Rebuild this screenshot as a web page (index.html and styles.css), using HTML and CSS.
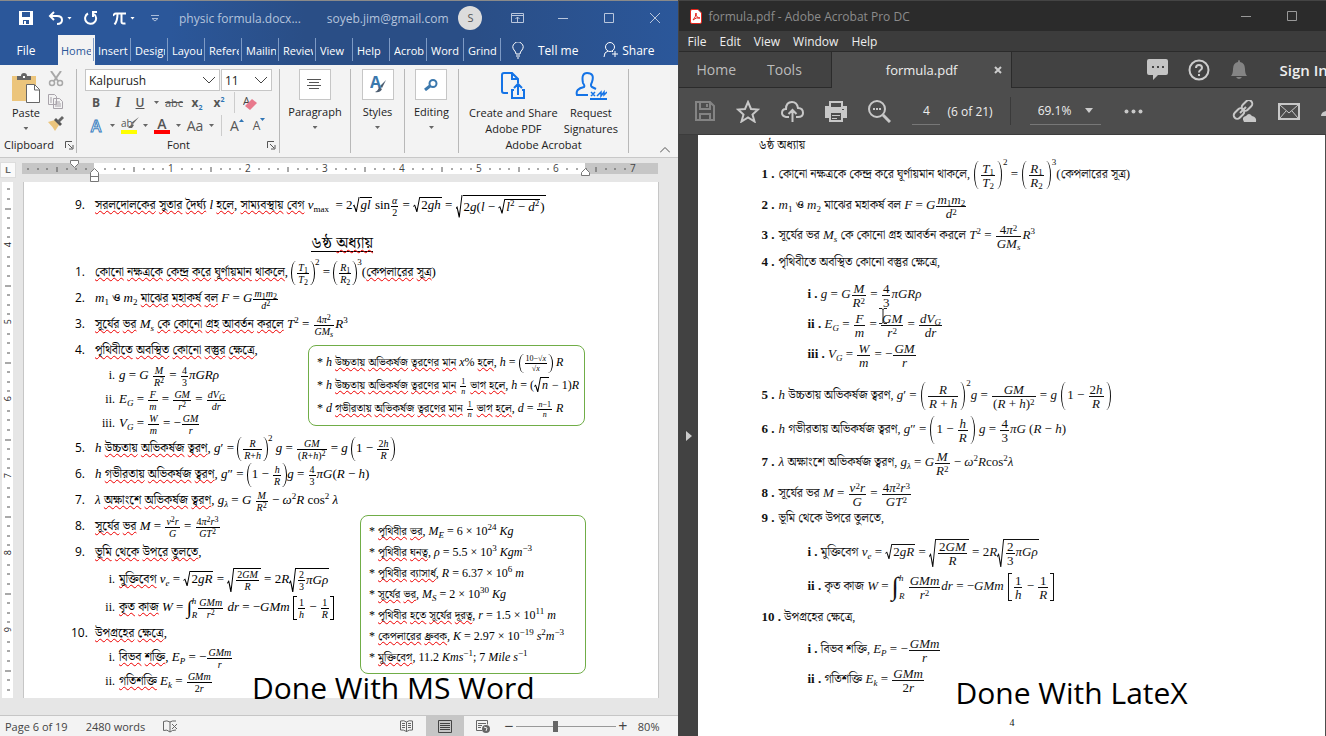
FILE: index.html
```
<!DOCTYPE html>
<html lang="bn">
  <head>
    <meta charset="utf-8">
    <title>Word and LaTeX</title>
    <link rel="stylesheet" href="styles.css">
  </head>
  <body>
    <svg class="defs">
      <symbol id="ticks" viewBox="0 0 67 12">
        <path d="M4 6h2M14 6h2M23 6h2M43 6h2M52 6h2M62 6h2" stroke="#555" stroke-width="1" fill="none" />
        <path d="M34 4v5" stroke="#555" fill="none" />
      </symbol>
      <symbol id="vticks" viewBox="0 0 12 67">
        <path d="M5 5h3M5 14h3M5 24h3M5 43h3M5 53h3M5 62h3M3 34h6" stroke="#555" fill="none" />
      </symbol>
      <symbol id="launch" viewBox="0 0 9 9">
        <path d="M.5 7V.5H7M3 3l4 4M8 4v4H4" stroke="#555" fill="none" />
      </symbol>
    </svg>

    <div class="screen">
      <section class="word">
        <header class="word-top">
          <div class="word-title">
            <button class="qa" aria-label="Save"><svg width="14" height="14" viewBox="0 0 14 14"><path d="M0 0h14v14H0z" fill="#fff" /><path d="M3 1h8v5H3zM4 9h6v4H4z" fill="#2b579a" /><path d="M5 10h2v3H5z" fill="#fff" /></svg></button>
            <button class="qa undo" aria-label="Undo"><svg width="15" height="14" viewBox="0 0 15 14"><path d="M6 1L2 5l4 4M2 5h7q5 0 5 4t-5 4" stroke="#fff" stroke-width="2" fill="none" /></svg></button>
            <span class="caret light"></span>
            <button class="qa redo" aria-label="Redo"><svg width="14" height="14" viewBox="0 0 14 14"><path d="M4 2.500A5.500 5.500 0 1 0 10 3M9 6V1M8 1h5" stroke="#fff" stroke-width="2" fill="none" /></svg></button>
            <button class="qa pi" aria-label="Equation"><svg width="13" height="13" viewBox="0 0 13 13"><path d="M0 4q1-2.500 3-2.500h10M4.500 2q0 7-3 10.500M8.500 2v8q0 2 4 1.500" stroke="#fff" stroke-width="2" fill="none" /></svg></button>
            <span class="caret light"></span>
            <svg class="more" width="8" height="7" viewBox="0 0 8 7"><path d="M0 .5h8M1 3.500h6L4 6z" stroke="#a9bcd9" fill="none" /></svg>
            <span class="doc-name">physic formula.docx...</span>
            <span class="account">soyeb.jim@gmail.com</span>
            <span class="avatar">S</span>
            <button class="win" aria-label="Ribbon options"><svg width="13" height="10" viewBox="0 0 13 10"><path d="M.5.5h12v9H.5zM0 2.500h13M6.500 9V4M4.500 6l2-2 2 2" /></svg></button>
            <button class="win" aria-label="Minimize"><svg width="10" height="10" viewBox="0 0 10 10"><path d="M0 5.500h10" /></svg></button>
            <button class="win" aria-label="Maximize"><svg width="10" height="10" viewBox="0 0 10 10"><path d="M.5.500h9v9h-9z" /></svg></button>
            <button class="win" aria-label="Close"><svg width="10" height="10" viewBox="0 0 10 10"><path d="M0 0l10 10M10 0L0 10" /></svg></button>
          </div>
          <nav class="tabs">
            <button class="file">File</button>
            <button class="tab active"><span>Home</span></button>
            <button class="tab"><span>Insert</span></button>
            <button class="tab"><span>Design</span></button>
            <button class="tab"><span>Layout</span></button>
            <button class="tab"><span>References</span></button>
            <button class="tab"><span>Mailings</span></button>
            <button class="tab"><span>Review</span></button>
            <button class="tab"><span>View</span></button>
            <button class="tab"><span>Help</span></button>
            <button class="tab"><span>Acrobat</span></button>
            <button class="tab"><span>Word</span></button>
            <button class="tab"><span>Grind</span></button>
            <button class="tell"><svg width="12" height="17" viewBox="0 0 12 17"><path d="M4 12q0-2-2-4a5 5 0 1 1 8 0q-2 2-2 4zM4 14h4M5 16h2" stroke="#fff" fill="none" /></svg>Tell me</button>
            <button class="share"><svg width="16" height="16" viewBox="0 0 16 16"><circle cx="7" cy="5" r="4.500" stroke="#fff" fill="none" /><path d="M1 15q0-5 4-6M9 9l1 1M12 9v6M9 12h6" stroke="#fff" fill="none" /></svg>Share</button>
          </nav>
        </header>

        <div class="ribbon">
          <div class="group clipboard">
            <div class="group-body">
              <button class="paste">
                <svg width="28" height="30" viewBox="0 0 28 30"><path d="M0 3h24v25H0z" fill="#ecc57c" /><path d="M5 3h4q0-3 3-3t3 3h4v4H5z" fill="#666" /><path d="M11 3h2v2h-2z" fill="#fff" /><path d="M14.500 11.500h8l5 5v13h-13z" fill="#fff" stroke="#666" /><path d="M22.500 12v5h5" fill="none" stroke="#666" /></svg>
                Paste
                <span class="caret"></span>
              </button>
              <div class="clip-icons">
                <button aria-label="Cut"><svg width="16" height="16" viewBox="0 0 16 16" fill="none" stroke="#a8a8a8" stroke-width="2"><path d="M3 0l7 10M13 0L6 10" /><circle cx="4" cy="12" r="2.500" stroke-width="1.500" /><circle cx="12" cy="12" r="2.500" stroke-width="1.500" /></svg></button>
                <button aria-label="Copy"><svg width="16" height="15" viewBox="0 0 16 15" fill="#f3f3f3" stroke="#a9a4ab"><path d="M.5.5h6l2 2v8h-8zM5.500 4.500h6l3 3v7h-9zM2 4h2M2 6h2M2 8h2M7 8h5M7 10h6M7 12h6" /></svg></button>
                <button aria-label="Format painter"><svg width="16" height="15" viewBox="0 0 16 15"><path d="M0 6l7-2 4 5-4 6q-2-4-7-9z" fill="#ecc57c" /><path d="M6 4l2-2 6 6-2 2z" fill="#555" /><path d="M9 5l5-5 2 2-5 5z" fill="#666" /></svg></button>
              </div>
            </div>
            <div class="group-name">Clipboard<svg class="launch"><use href="#launch" /></svg></div>
          </div>

          <div class="group font">
            <div class="combos">
              <select class="combo face" aria-label="Font"><option>Kalpurush</option></select>
              <select class="combo size" aria-label="Font size"><option>11</option></select>
            </div>
            <div class="tools">
              <button class="bold">B</button>
              <button class="italic">I</button>
              <button class="under">U</button>
              <span class="caret"></span>
              <button class="strike">abc</button>
              <button class="bold">x<sub>2</sub></button>
              <button class="bold">x<sup>2</sup></button>
              <span class="split"></span>
              <button class="clear" aria-label="Clear formatting"><svg width="15" height="15" viewBox="0 0 15 15"><text x="0" y="9" font-size="11" fill="#444">A</text><path d="M9 3l5 4-7 7-5-4z" fill="#e8798c" /></svg></button>
            </div>
            <div class="tools">
              <button class="effect">A</button>
              <span class="caret"></span>
              <button class="mark">ab<svg width="12" height="12" viewBox="0 0 12 12"><path d="M12 0L6 7 4 6zM5 7L1 11h4l2-3z" fill="#666" /></svg></button>
              <span class="caret"></span>
              <button class="color">A</button>
              <span class="caret"></span>
              <button class="case">Aa</button>
              <span class="caret"></span>
              <span class="split"></span>
              <button class="grow">A<svg width="5" height="3" viewBox="0 0 5 3"><path d="M0 3h5L2.500 0z" fill="#2f75b5" /></svg></button>
              <button class="grow small">A<svg width="5" height="3" viewBox="0 0 5 3"><path d="M0 0h5L2.500 3z" fill="#2f75b5" /></svg></button>
            </div>
            <div class="group-name">Font<svg class="launch"><use href="#launch" /></svg></div>
          </div>

          <div class="group wide">
            <button class="big">
              <span class="tile"><svg width="16" height="12" viewBox="0 0 16 12"><path d="M0 .5h14M2 3.500h10M0 6.500h14M2 9.500h10" stroke="#555" /></svg></span>
              Paragraph
              <span class="caret"></span>
            </button>
          </div>
          <div class="group">
            <button class="big">
              <span class="tile"><svg width="16" height="17" viewBox="0 0 16 17"><text class="glyph" x="0" y="12">A</text><path d="M16 4l-4 8-2-2zM9 11l3 2q-2 4-7 3 3-1 4-5z" fill="#4b5c70" /></svg></span>
              Styles
              <span class="caret"></span>
            </button>
          </div>
          <div class="group">
            <button class="big">
              <span class="tile"><svg width="14" height="12" viewBox="0 0 14 12"><circle cx="9" cy="4.500" r="3.500" fill="none" stroke="#3b78ad" stroke-width="2" /><path d="M6 7l-5 4" stroke="#3b78ad" stroke-width="3" /></svg></span>
              Editing
              <span class="caret"></span>
            </button>
          </div>
          <div class="group acrobat">
            <div class="group-body">
              <button class="adobe">
                <svg width="24" height="28" viewBox="0 0 24 28" fill="none" stroke="#1473e6" stroke-width="2"><path d="M7 21H3q-2 0-2-2V3q0-2 2-2h8l6 6v4M11 1v6h6M13 18h-2v8h12v-8h-2M17 23V13M13 16l4-4 4 4" /></svg>
                Create and Share<br>Adobe PDF
              </button>
              <button class="adobe">
                <svg width="32" height="28" viewBox="0 0 32 28" fill="none" stroke="#1473e6" stroke-width="2"><path d="M13 23H2q-2-6 7-8 1-1-1-4-2-10 4-10 8 0 5 9-2 4 0 5l4 2M15 27h17" /><path d="M16 20l4 4M20 20l-4 4M22 24l4-4v4l3-4v3l3-3" stroke-width="1.500" /></svg>
                Request<br>Signatures
              </button>
            </div>
            <div class="group-name">Adobe Acrobat</div>
          </div>
          <button class="collapse" aria-label="Collapse ribbon"><svg width="10" height="6" viewBox="0 0 10 6"><path d="M0 5.500l5-5 5 5" stroke="#555" fill="none" /></svg></button>
        </div>

        <div class="ruler">
          <span class="tab-kind">L</span>
          <div class="scale">
            <span class="inch"><svg><use href="#ticks" /></svg></span>
            <span class="inch"><svg><use href="#ticks" /></svg>1</span>
            <span class="inch"><svg><use href="#ticks" /></svg>2</span>
            <span class="inch"><svg><use href="#ticks" /></svg>3</span>
            <span class="inch"><svg><use href="#ticks" /></svg>4</span>
            <span class="inch"><svg><use href="#ticks" /></svg>5</span>
            <span class="inch"><svg><use href="#ticks" /></svg>6</span>
            <span class="inch"><svg><use href="#ticks" /></svg>7</span>
            <svg class="marker first" width="9" height="8" viewBox="0 0 9 8"><path d="M.5.5h8v3l-4 4-4-4z" fill="#fff" stroke="#777" /></svg>
            <svg class="marker hang" width="9" height="14" viewBox="0 0 9 14"><path d="M4.500.5l4 4v9h-8v-9zM.5 8.500h8" fill="#fff" stroke="#777" /></svg>
            <svg class="marker right" width="9" height="8" viewBox="0 0 9 8"><path d="M4.500.5l4 4v3h-8v-3z" fill="#fff" stroke="#777" /></svg>
          </div>
        </div>

        <div class="canvas">
          <div class="vruler">
            <span class="vinch"><svg><use href="#vticks" /></svg><b>4</b></span>
            <span class="vinch"><svg><use href="#vticks" /></svg><b>5</b></span>
            <span class="vinch"><svg><use href="#vticks" /></svg><b>6</b></span>
            <span class="vinch"><svg><use href="#vticks" /></svg><b>7</b></span>
            <span class="vinch"><svg><use href="#vticks" /></svg><b>8</b></span>
            <span class="vinch"><svg><use href="#vticks" /></svg><b>9</b></span>
            <span class="vinch"><svg><use href="#vticks" /></svg></span>
          </div>

          <article class="page">
            <p class="line top"><span class="num">9.</span><u>সরলদোলকের</u> <u>সুতার</u> <u>দৈর্ঘ্য</u> <i>l</i> <u>হলে</u>, <u>সাম্যবস্থায়</u> <u>বেগ</u> <i>v</i><sub>max</sub>&nbsp; = 2<span class="sqrt"><span><i>gl</i></span></span> sin<span class="frac"><span><i>α</i></span><span>2</span></span> = <span class="sqrt"><span>2<i>gh</i></span></span> = <span class="sqrt tall"><span>2<i>g</i>(<i>l</i> − <span class="sqrt"><span><i>l</i><sup>2</sup> − <i>d</i><sup>2</sup></span></span>)</span></span></p>
            <h2 class="chapter"><span>৬ষ্ঠ <u>অধ্যায়</u></span></h2>
            <p class="line"><span class="num">1.</span><u>কোনো</u> <u>নক্ষত্রকে</u> <u>কেন্দ্র</u> <u>করে</u> <u>ঘূর্ণায়মান</u> <u>থাকলে</u>, <span class="lp"></span><span class="frac"><span><i>T</i><sub>1</sub></span><span><i>T</i><sub>2</sub></span></span><span class="rp"></span><sup class="hi">2</sup> = <span class="lp"></span><span class="frac"><span><i>R</i><sub>1</sub></span><span><i>R</i><sub>2</sub></span></span><span class="rp"></span><sup class="hi">3</sup>(<u>কেপলারের</u> <u>সূত্র</u>)</p>
            <p class="line"><span class="num">2.</span><i>m</i><sub>1</sub> <span class="bn">ও</span> <i>m</i><sub>2</sub> <u>মাঝের</u> <u>মহাকর্ষ</u> <u>বল</u> <i>F</i> = <i>G</i><span class="frac"><span><i>m</i><sub>1</sub><i>m</i><sub>2</sub></span><span><i>d</i><sup>2</sup></span></span></p>
            <p class="line"><span class="num">3.</span><u>সূর্যের</u> <u>ভর</u> <i>M<sub>s</sub></i> <u>কে</u> <u>কোনো</u> <u>গ্রহ</u> <u>আবর্তন</u> <u>করলে</u> <i>T</i><sup>2</sup> = <span class="frac"><span>4<i>π</i><sup>2</sup></span><span><i>GM<sub>s</sub></i></span></span><i>R</i><sup>3</sup></p>
            <p class="line"><span class="num">4.</span><u>পৃথিবীতে</u> <u>অবস্থিত</u> <u>কোনো</u> <u>বস্তুর</u> <u>ক্ষেত্রে</u>,</p>
            <p class="line sub"><span class="num">i.</span><i>g</i> = <i>G</i> <span class="frac"><span><i>M</i></span><span><i>R</i><sup>2</sup></span></span> = <span class="frac"><span>4</span><span>3</span></span><i>πGRρ</i></p>
            <p class="line sub"><span class="num">ii.</span><i>E<sub>G</sub></i> = <span class="frac"><span><i>F</i></span><span><i>m</i></span></span> = <span class="frac"><span><i>GM</i></span><span><i>r</i><sup>2</sup></span></span> = <span class="frac"><span><i>dV<sub>G</sub></i></span><span><i>dr</i></span></span></p>
            <p class="line sub"><span class="num">iii.</span><i>V<sub>G</sub></i> = <span class="frac"><span><i>W</i></span><span><i>m</i></span></span> = −<span class="frac"><span><i>GM</i></span><span><i>r</i></span></span></p>
            <p class="line"><span class="num">5.</span><i>h</i> <u>উচ্চতায়</u> <u>অভিকর্ষজ</u> <u>ত্বরণ</u>, <i>g</i>′ = <span class="lp"></span><span class="frac"><span><i>R</i></span><span><i>R</i>+<i>h</i></span></span><span class="rp"></span><sup class="hi">2</sup> <i>g</i> = <span class="frac"><span><i>GM</i></span><span>(<i>R</i>+<i>h</i>)<sup>2</sup></span></span> = <i>g</i> <span class="lp"></span>1 − <span class="frac"><span>2<i>h</i></span><span><i>R</i></span></span><span class="rp"></span></p>
            <p class="line"><span class="num">6.</span><i>h</i> <u>গভীরতায়</u> <u>অভিকর্ষজ</u> <u>ত্বরণ</u>, <i>g</i>″ = <span class="lp"></span>1 − <span class="frac"><span><i>h</i></span><span><i>R</i></span></span><span class="rp"></span><i>g</i> = <span class="frac"><span>4</span><span>3</span></span><i>πG</i>(<i>R</i> − <i>h</i>)</p>
            <p class="line"><span class="num">7.</span><i>λ</i> <u>অক্ষাংশে</u> <u>অভিকর্ষজ</u> <u>ত্বরণ</u>, <i>g<sub>λ</sub></i> = <i>G</i> <span class="frac"><span><i>M</i></span><span><i>R</i><sup>2</sup></span></span> − <i>ω</i><sup>2</sup><i>R</i> cos<sup>2</sup> <i>λ</i></p>
            <p class="line"><span class="num">8.</span><u>সূর্যের</u> <u>ভর</u> <i>M</i> = <span class="frac"><span><i>v</i><sup>2</sup><i>r</i></span><span><i>G</i></span></span> = <span class="frac"><span>4<i>π</i><sup>2</sup><i>r</i><sup>3</sup></span><span><i>GT</i><sup>2</sup></span></span></p>
            <p class="line"><span class="num">9.</span><u>ভূমি</u> <u>থেকে</u> <u>উপরে</u> <u>তুলতে</u>,</p>
            <p class="line sub deep"><span class="num">i.</span><u>মুক্তিবেগ</u> <i>v<sub>e</sub></i> = <span class="sqrt"><span>2<i>gR</i></span></span> = <span class="sqrt tall"><span><span class="frac"><span>2<i>GM</i></span><span><i>R</i></span></span></span></span> = 2<i>R</i><span class="sqrt tall"><span><span class="frac"><span>2</span><span>3</span></span><i>πGρ</i></span></span></p>
            <p class="line sub deep"><span class="num">ii.</span><u>কৃত</u> <u>কাজ</u> <i>W</i> = <span class="int">∫</span><span class="lim"><i>h</i><i>R</i></span><span class="frac"><span><i>GMm</i></span><span><i>r</i><sup>2</sup></span></span> <i>dr</i> = −<i>GMm</i> <span class="lb"></span><span class="frac"><span>1</span><span><i>h</i></span></span> − <span class="frac"><span>1</span><span><i>R</i></span></span><span class="rb"></span></p>
            <p class="line ten"><span class="num">10.</span><u>উপগ্রহের</u> <u>ক্ষেত্রে</u>,</p>
            <p class="line sub"><span class="num">i.</span><u>বিভব</u> <u>শক্তি</u>, <i>E<sub>P</sub></i> = −<span class="frac"><span><i>GMm</i></span><span><i>r</i></span></span></p>
            <p class="line sub"><span class="num">ii.</span><u>গতিশক্তি</u> <i>E<sub>k</sub></i> = <span class="frac"><span><i>GMm</i></span><span>2<i>r</i></span></span></p>

            <aside class="note heights">
              <p>* <i>h</i> <u>উচ্চতায়</u> <u>অভিকর্ষজ</u> <u>ত্বরণের</u> <u>মান</u> <i>x</i>% <u>হলে</u>, <i>h</i> = <span class="lp"></span><span class="frac"><span>10−√<i>x</i></span><span>√<i>x</i></span></span><span class="rp"></span> <i>R</i></p>
              <p>* <i>h</i> <u>উচ্চতায়</u> <u>অভিকর্ষজ</u> <u>ত্বরণের</u> <u>মান</u> <span class="frac"><span>1</span><span><i>n</i></span></span> <u>ভাগ</u> <u>হলে</u>, <i>h</i> = (<span class="sqrt"><span><i>n</i></span></span> − 1)<i>R</i></p>
              <p>* <i>d</i> <u>গভীরতায়</u> <u>অভিকর্ষজ</u> <u>ত্বরণের</u> <u>মান</u> <span class="frac"><span>1</span><span><i>n</i></span></span> <u>ভাগ</u> <u>হলে</u>, <i>d</i> = <span class="frac"><span><i>n</i>−1</span><span><i>n</i></span></span> <i>R</i></p>
            </aside>
            <aside class="note values">
              <p>* <u>পৃথিবীর</u> <u>ভর</u>, <i>M<sub>E</sub></i> = 6 × 10<sup>24</sup> <i>Kg</i></p>
              <p>* <u>পৃথিবীর</u> <u>ঘনত্ব</u>, <i>ρ</i> = 5.5 × 10<sup>3</sup> <i>Kgm</i><sup>−3</sup></p>
              <p>* <u>পৃথিবীর</u> <u>ব্যাসার্ধ</u>, <i>R</i> = 6.37 × 10<sup>6</sup> <i>m</i></p>
              <p>* <u>সূর্যের</u> <u>ভর</u>, <i>M<sub>S</sub></i> = 2 × 10<sup>30</sup> <i>Kg</i></p>
              <p>* <u>পৃথিবীর</u> <u>হতে</u> <u>সূর্যের</u> <u>দূরত্ব</u>, <i>r</i> = 1.5 × 10<sup>11</sup> <i>m</i></p>
              <p>* <u>কেপলারের</u> <u>ধ্রুবক</u>, <i>K</i> = 2.97 × 10<sup>−19</sup> <i>s</i><sup>2</sup><i>m</i><sup>−3</sup></p>
              <p>* <u>মুক্তিবেগ</u>, 11.2 <i>Kms</i><sup>−1</sup>; 7 <i>Mile s</i><sup>−1</sup></p>
            </aside>
            <div class="caption">Done With MS Word</div>
          </article>
        </div>

        <footer class="status">
          <span>Page 6 of 19</span>
          <span class="words">2480 words</span>
          <svg width="15" height="13" viewBox="0 0 15 13" fill="none" stroke="#666"><path d="M7 12V2Q4 0 .5 1.500v9Q4 9 7 12zM7 2q2-1.500 6-1M7 12q2-2 6-2M9 4l5 5M14 4L9 9" /></svg>
          <span class="spacer"></span>
          <button class="view" aria-label="Read mode"><svg width="13" height="12" viewBox="0 0 13 12" fill="none" stroke="#666"><path d="M6.500 12V2Q4 0 .5 1v9q3-.5 6 1.500 3-2 6-1.500V1q-3.500-1-6 1M2 3.500h3M2 5.500h3M2 7.500h3M8 3.500h3M8 5.500h3M8 7.500h3" /></svg></button>
          <button class="view on" aria-label="Print layout"><svg width="14" height="13" viewBox="0 0 14 13" fill="none" stroke="#444"><path d="M.5.5h13v12H.5zM2 3.500h10M2 5.500h10M2 7.500h10M2 9.500h10" /></svg></button>
          <button class="view" aria-label="Web layout"><svg width="14" height="13" viewBox="0 0 14 13" fill="none" stroke="#666"><path d="M6 10.500H.5V.5h11v4M2 3.500h8M2 5.500h4M2 7.500h3" /><circle cx="10" cy="9" r="4" fill="#666" stroke="none" /><path d="M8 7l3 1-1 3" stroke="#eee" /></svg></button>
          <span class="zoom-sign">−</span>
          <input class="zoom" type="range" min="10" max="190" value="80" aria-label="Zoom">
          <span class="zoom-sign">+</span>
          <span class="percent">80%</span>
        </footer>
      </section>

      <section class="acro">
        <header class="acro-title">
          <svg width="12" height="15" viewBox="0 0 12 15"><path d="M2 .5h6l3.500 3.500v9q0 1.500-1.500 1.500H2Q.5 14.500.5 13V2Q.5.5 2 .5z" fill="#fff" stroke="#e2231a" /><path d="M3 11q3-3 3-7 0 5 4 5-4-1-7 2" fill="none" stroke="#e2231a" /></svg>
          <span>formula.pdf - Adobe Acrobat Pro DC</span>
          <span class="spacer"></span>
          <button class="win" aria-label="Minimize"><svg width="10" height="10" viewBox="0 0 10 10"><path d="M0 5.500h10" /></svg></button>
          <button class="win" aria-label="Maximize"><svg width="10" height="10" viewBox="0 0 10 10"><path d="M.5.5h9v9h-9z" /></svg></button>
        </header>
        <nav class="menu">
          <button>File</button><button>Edit</button><button>View</button><button>Window</button><button>Help</button>
        </nav>
        <div class="acro-tabs">
          <div class="home-tabs"><button>Home</button><button>Tools</button></div>
          <div class="file-tab"><span>formula.pdf</span><button aria-label="Close tab"><svg width="8" height="8" viewBox="0 0 8 8"><path d="M1 1l6 6M7 1L1 7" stroke="#ccc" stroke-width="2" /></svg></button></div>
          <div class="user-tabs">
            <svg width="21" height="21" viewBox="0 0 21 21"><path d="M2 0h17q2 0 2 2v12q0 2-2 2h-8l-5 5v-5H2q-2 0-2-2V2q0-2 2-2z" fill="#c4c4c4" /><path d="M5 7h2v2H5zM10 7h2v2h-2zM15 7h2v2h-2z" fill="#444" /></svg>
            <svg width="22" height="22" viewBox="0 0 22 22"><circle cx="11" cy="11" r="9.500" fill="none" stroke="#ccc" stroke-width="2" /><path d="M8 9q0-3 3-3t3 3q0 1-1.500 2T11 13.500M11 15v2" fill="none" stroke="#ccc" stroke-width="2" /></svg>
            <svg width="18" height="20" viewBox="0 0 18 20"><path d="M9 0q1 0 1 2 5 1 5 7 0 5 2 7H1q2-2 2-7 0-6 5-7 0-2 1-2zM6 17h6q-3 4-6 0z" fill="#848484" /></svg>
            <button class="sign">Sign In</button>
          </div>
        </div>
        <div class="acro-tools">
          <button aria-label="Save"><svg width="20" height="20" viewBox="0 0 20 20" fill="none" stroke="#848484" stroke-width="2"><path d="M1 1h14l4 4v14H1zM5 1v7h10V1M5 19v-6h10v6M12 3v3" /></svg></button>
          <button aria-label="Star"><svg width="24" height="23" viewBox="0 0 24 23"><path d="M12 2l3 7 7 .5-5.500 5 2 7L12 17.500l-6.500 4 2-7L2 9.500 9 9z" fill="none" stroke="#c8c8c8" stroke-width="2" /></svg></button>
          <button aria-label="Upload"><svg width="23" height="21" viewBox="0 0 23 21" fill="none" stroke="#c8c8c8" stroke-width="2"><path d="M8 16H5q-4-1-4-4 0-4 4-4 0-7 6-7 5 0 6 6 5 0 5 5 0 4-5 4h-2M11.500 21V9M7.500 13l4-4 4 4" /></svg></button>
          <button aria-label="Print"><svg width="22" height="21" viewBox="0 0 22 21"><path d="M4 0h14v5h4v12h-4v4H4v-4H0V5h4z" fill="#c8c8c8" /><path d="M6 2h10v4H6zM6 12h10v7H6zM17 8h2v1h-2z" fill="#4d4d4d" /><path d="M7 14.500h8M7 17.500h5" stroke="#c8c8c8" /></svg></button>
          <button aria-label="Search"><svg width="23" height="23" viewBox="0 0 23 23" fill="none" stroke="#c8c8c8" stroke-width="2"><circle cx="9" cy="9" r="8" /><path d="M15 15l7 7" stroke-width="3" /><path d="M5 9h2M8 9h2M11 9h2" /></svg></button>
          <input class="page-no" value="4" aria-label="Page">
          <span class="of">(6 of 21)</span>
          <span class="bar"></span>
          <select class="zoom-pick" aria-label="Zoom level"><option>69.1%</option></select>
          <svg class="dots" width="19" height="5" viewBox="0 0 19 5" fill="#c8c8c8"><circle cx="2.500" cy="2.500" r="2" /><circle cx="9.500" cy="2.500" r="2" /><circle cx="16.500" cy="2.500" r="2" /></svg>
          <span class="spacer"></span>
          <button aria-label="Share link"><svg width="25" height="22" viewBox="0 0 25 22"><g fill="none" stroke="#c8c8c8" stroke-width="2"><rect x="9" y="2" width="12" height="7" rx="3.500" transform="rotate(-45 15 5.500)" /><rect x="1" y="10" width="12" height="7" rx="3.500" transform="rotate(-45 7 13.500)" /><path d="M8 13l6-6" /></g><path d="M12 22q-3-5 2-6 3-4 6 0 5 1 4 6z" fill="#c8c8c8" /></svg></button>
          <button class="mail" aria-label="Mail"><svg width="22" height="17" viewBox="0 0 22 17" fill="none" stroke="#c8c8c8"><path d="M1 1h20v15H1z" stroke-width="2" /><path d="M2 2l9 8 9-8M2 15l6-7M20 15l-6-7" /></svg></button>
          <svg class="cut" width="5" height="10" viewBox="0 0 5 10"><path d="M0 10q0-4 5-5v5z" fill="#c8c8c8" /></svg>
        </div>
        <div class="acro-view">
          <div class="pane"><svg width="6" height="10" viewBox="0 0 6 10"><path d="M0 0l6 5-6 5z" fill="#ccc" /></svg></div>
          <article class="tex">
            <p class="head">৬ষ্ঠ অধ্যায়</p>
            <p class="line"><b class="num">1 .</b><span class="bn">কোনো নক্ষত্রকে কেন্দ্র করে ঘূর্ণায়মান থাকলে,</span> <span class="lp"></span><span class="frac"><span><i>T</i><sub>1</sub></span><span><i>T</i><sub>2</sub></span></span><span class="rp"></span><sup class="hi">2</sup> = <span class="lp"></span><span class="frac"><span><i>R</i><sub>1</sub></span><span><i>R</i><sub>2</sub></span></span><span class="rp"></span><sup class="hi">3</sup>(<span class="bn">কেপলারের সূত্র</span>)</p>
            <p class="line low"><b class="num">2 .</b><i>m</i><sub>1</sub> <span class="bn">ও</span> <i>m</i><sub>2</sub> <span class="bn">মাঝের মহাকর্ষ বল</span> <i>F</i> = <i>G</i><span class="frac"><span><i>m</i><sub>1</sub><i>m</i><sub>2</sub></span><span><i>d</i><sup>2</sup></span></span></p>
            <p class="line"><b class="num">3 .</b><span class="bn">সূর্যের ভর</span> <i>M<sub>s</sub></i> <span class="bn">কে কোনো গ্রহ আবর্তন করলে</span> <i>T</i><sup>2</sup> = <span class="frac"><span>4<i>π</i><sup>2</sup></span><span><i>GM<sub>s</sub></i></span></span><i>R</i><sup>3</sup></p>
            <p class="line plain"><b class="num">4 .</b><span class="bn">পৃথিবীতে অবস্থিত কোনো বস্তুর ক্ষেত্রে,</span></p>
            <div class="sublist">
              <p class="line sub"><b>i .</b> <i>g</i> = <i>G</i><span class="frac"><span><i>M</i></span><span><i>R</i><sup>2</sup></span></span> = <span class="frac"><span>4</span><span>3</span></span><i>πGRρ</i></p>
              <p class="line sub"><b>ii .</b> <i>E<sub>G</sub></i> = <span class="frac"><span><i>F</i></span><span><i>m</i></span></span> = <span class="frac"><span><i>GM</i></span><span><i>r</i><sup>2</sup></span></span> = <span class="frac"><span><i>dV<sub>G</sub></i></span><span><i>dr</i></span></span></p>
              <p class="line sub"><b>iii .</b> <i>V<sub>G</sub></i> = <span class="frac"><span><i>W</i></span><span><i>m</i></span></span> = −<span class="frac"><span><i>GM</i></span><span><i>r</i></span></span></p>
            </div>
            <p class="line high"><b class="num">5 .</b><i>h</i> <span class="bn">উচ্চতায় অভিকর্ষজ ত্বরণ,</span> <i>g</i>′ = <span class="lp"></span><span class="frac"><span><i>R</i></span><span><i>R</i> + <i>h</i></span></span><span class="rp"></span><sup class="hi">2</sup><i>g</i> = <span class="frac"><span><i>GM</i></span><span>(<i>R</i> + <i>h</i>)<sup>2</sup></span></span> = <i>g</i> <span class="lp"></span>1 − <span class="frac"><span>2<i>h</i></span><span><i>R</i></span></span><span class="rp"></span></p>
            <p class="line high"><b class="num">6 .</b><i>h</i> <span class="bn">গভীরতায় অভিকর্ষজ ত্বরণ,</span> <i>g</i>″ = <span class="lp"></span>1 − <span class="frac"><span><i>h</i></span><span><i>R</i></span></span><span class="rp"></span> <i>g</i> = <span class="frac"><span>4</span><span>3</span></span><i>πG</i> (<i>R</i> − <i>h</i>)</p>
            <p class="line"><b class="num">7 .</b><i>λ</i> <span class="bn">অক্ষাংশে অভিকর্ষজ ত্বরণ,</span> <i>g<sub>λ</sub></i> = <i>G</i><span class="frac"><span><i>M</i></span><span><i>R</i><sup>2</sup></span></span> − <i>ω</i><sup>2</sup><i>R</i>cos<sup>2</sup><i>λ</i></p>
            <p class="line low"><b class="num">8 .</b><span class="bn">সূর্যের ভর</span> <i>M</i> = <span class="frac"><span><i>v</i><sup>2</sup><i>r</i></span><span><i>G</i></span></span> = <span class="frac"><span>4<i>π</i><sup>2</sup><i>r</i><sup>3</sup></span><span><i>GT</i><sup>2</sup></span></span></p>
            <p class="line plain"><b class="num">9 .</b><span class="bn">ভূমি থেকে উপরে তুলতে,</span></p>
            <div class="sublist tight">
              <p class="line sub high"><b>i .</b> <span class="bn">মুক্তিবেগ</span> <i>v<sub>e</sub></i> = <span class="sqrt"><span>2<i>gR</i></span></span> = <span class="sqrt tall"><span><span class="frac"><span>2<i>GM</i></span><span><i>R</i></span></span></span></span> = 2<i>R</i><span class="sqrt tall"><span><span class="frac"><span>2</span><span>3</span></span><i>πGρ</i></span></span></p>
              <p class="line sub high"><b>ii .</b> <span class="bn">কৃত কাজ</span> <i>W</i> = <span class="int">∫</span><span class="lim"><i>h</i><i>R</i></span> <span class="frac"><span><i>GMm</i></span><span><i>r</i><sup>2</sup></span></span><i>dr</i> = −<i>GMm</i> <span class="lb"></span><span class="frac"><span>1</span><span><i>h</i></span></span> − <span class="frac"><span>1</span><span><i>R</i></span></span><span class="rb"></span></p>
            </div>
            <p class="line plain"><b class="num">10 .</b><span class="bn">উপগ্রহের ক্ষেত্রে,</span></p>
            <div class="sublist">
              <p class="line sub"><b>i .</b> <span class="bn">বিভব শক্তি,</span> <i>E<sub>P</sub></i> = −<span class="frac"><span><i>GMm</i></span><span><i>r</i></span></span></p>
              <p class="line sub"><b>ii .</b> <span class="bn">গতিশক্তি</span> <i>E<sub>k</sub></i> = <span class="frac"><span><i>GMm</i></span><span>2<i>r</i></span></span></p>
            </div>
            <p class="folio">4</p>
            <div class="caption">Done With LateX</div>
            <svg class="cursor" width="8" height="16" viewBox="0 0 8 16"><path d="M0 .5h3l1 1 1-1h3M4 1v14M0 15.500h3l1-1 1 1h3" stroke="#222" fill="none" /></svg>
          </article>
        </div>
      </section>
    </div>
  </body>
</html>
```

FILE: styles.css
```
* {
  box-sizing: border-box;
}
body {
  margin: 0;
  font-family: "Open Sans", "Noto Sans", sans-serif;
  font-size: 12px;
  color: #222;
}
p,
h2 {
  margin: 0;
}
button,
input,
select {
  font: inherit;
  color: inherit;
  background: none;
  border: none;
  padding: 0;
  margin: 0;
}
svg {
  flex: none;
}
.defs {
  position: absolute;
  width: 0;
  height: 0;
}
.spacer {
  flex: 1;
}
.screen {
  display: flex;
  height: 100vh;
  overflow: hidden;
}

/* ---------- Word ---------- */
.word {
  flex: 679 1 0;
  min-width: 0;
  display: flex;
  flex-direction: column;
  background: #e6e6e6;
  border-right: 1px solid #444;
}
.word-top {
  background: linear-gradient(90deg, #2b579a 25%, #2a4e86 45%, #2a4e86 70%, #2b579a);
  border-top: 1px solid #8a8a8a;
  color: #fff;
}
.word-title {
  display: flex;
  align-items: center;
  height: 34px;
  padding-left: 19px;
  color: #b4c3dc;
}
.qa {
  display: flex;
}
.undo {
  margin-left: 15px;
}
.redo {
  margin-left: 8px;
}
.pi {
  margin-left: 15px;
}
.caret {
  flex: none;
  width: 5px;
  height: 3px;
  margin: 0 4px;
  background: #666;
  clip-path: polygon(0 0, 100% 0, 50% 100%);
}
.light {
  background: #fff;
}
.more {
  margin: 0 20px 0 12px;
}
.account {
  margin-left: auto;
}
.avatar {
  width: 24px;
  height: 24px;
  margin: 0 12px 0 10px;
  border-radius: 50%;
  background: #dcdcdc;
  color: #555;
  font-size: 11px;
  line-height: 24px;
  text-align: center;
}
.win {
  width: 46px;
  display: flex;
  justify-content: center;
}
.win path {
  fill: none;
  stroke: #b9c6dc;
}
.tabs {
  display: flex;
  height: 30px;
}
.file {
  width: 58px;
  padding-right: 6px;
}
.tab {
  width: 37px;
  padding: 0 4px 0 3px;
  position: relative;
  font-size: 11px;
}
.tab span {
  display: block;
  overflow: hidden;
  text-align: left;
}
.tab::after {
  content: "";
  position: absolute;
  right: 1px;
  top: 3px;
  bottom: 4px;
  border-right: 1px solid #7d9ac5;
}
.active {
  background: #f3f3f3;
  color: #2b579a;
}
.tell,
.share {
  display: flex;
  align-items: center;
}
.tell {
  margin-left: 10px;
  gap: 14px;
}
.share {
  margin-left: auto;
  margin-right: 24px;
  gap: 3px;
}

.ribbon {
  display: flex;
  height: 93px;
  padding: 4px 0;
  background: #f3f3f3;
  border-bottom: 1px solid #c8c8c8;
  font-size: 11px;
}
.group {
  flex: none;
  width: 54px;
  display: flex;
  flex-direction: column;
  align-items: center;
  border-right: 1px solid #b8b8b8;
}
.clipboard {
  width: 77px;
}
.font {
  width: 203px;
  padding: 0 7px 0 8px;
}
.wide {
  width: 71px;
}
.acrobat {
  width: 170px;
}
.group-body {
  display: flex;
  justify-content: center;
}
.group-name {
  margin-top: auto;
  line-height: 16px;
  width: 100%;
  text-align: center;
  position: relative;
}
.clipboard .group-name {
  text-align: left;
  padding-left: 4px;
}
.launch {
  position: absolute;
  right: 2px;
  top: 4px;
  width: 9px;
  height: 9px;
}
.font .launch {
  right: -4px;
}
.paste,
.big,
.adobe {
  display: flex;
  flex-direction: column;
  align-items: center;
}
.paste {
  padding-top: 4px;
  line-height: 20px;
}
.paste .caret {
  margin-top: 4px;
}
.clip-icons {
  display: flex;
  flex-direction: column;
  gap: 7px;
  padding: 2px 0 0 8px;
}
.clip-icons button {
  display: flex;
}
.combos {
  display: flex;
  width: 187px;
  gap: 1px;
}
.combo {
  appearance: none;
  height: 22px;
  padding-left: 3px;
  border: 1px solid #c6c6c6;
  font-size: 12px;
  background: #fff url("data:image/svg+xml,%3Csvg xmlns='http://www.w3.org/2000/svg' width='14' height='8'%3E%3Cpath d='M1 1l6 6 6-6' fill='none' stroke='%23444'/%3E%3C/svg%3E") no-repeat right 3px center;
}
.face {
  flex: 1;
}
.size {
  width: 51px;
}
.tools {
  display: flex;
  align-items: center;
  width: 187px;
  height: 24px;
  font-size: 12px;
  color: #555;
}
.tools button {
  width: 22px;
  height: 20px;
  line-height: 20px;
  text-align: center;
  white-space: nowrap;
}
.tools .caret {
  margin: 0 3px;
}
.tools sup,
.tools sub {
  font-size: 7px;
  color: #2f75b5;
}
.bold {
  font-weight: bold;
}
.italic {
  font: italic bold 14px "Liberation Serif", serif;
}
.under {
  text-decoration: underline;
  font-weight: 600;
}
.tools .strike {
  width: 24px;
  font-size: 11px;
  text-decoration: line-through;
}
.split {
  height: 21px;
  margin: 0 4px;
  border-left: 1px solid #ccc;
}
.clear svg {
  vertical-align: middle;
}
.effect {
  font-size: 16px;
  font-weight: 600;
  color: #fff;
  -webkit-text-stroke: 1px #3a7fc0;
}
.tools .mark,
.tools .color {
  width: 16px;
  height: 17px;
  margin: 0 3px;
  line-height: 13px;
}
.mark {
  display: flex;
  font-size: 10px;
  border-bottom: 4px solid #ff0;
}
.mark svg {
  margin-left: -6px;
}
.color {
  font-size: 14px;
  font-weight: 600;
  border-bottom: 4px solid #f00;
}
.case,
.grow {
  font-size: 14px;
}
.grow svg {
  vertical-align: 9px;
}
.small {
  font-size: 12px;
}
.big {
  line-height: 20px;
}
.tile {
  display: flex;
  align-items: center;
  justify-content: center;
  width: 32px;
  height: 31px;
  margin-bottom: 2px;
  background: #fff;
  border: 1px solid #c6c6c6;
}
.glyph {
  font-size: 16px;
  font-weight: bold;
  fill: #3b78ad;
}
.big .caret {
  margin-top: 4px;
}
.adobe {
  display: block;
  flex: none;
  line-height: 16px;
  padding: 3px 3px 0;
  white-space: nowrap;
}
.adobe svg {
  display: block;
  margin: 0 auto 5px;
}
.collapse {
  margin: auto 8px 0 auto;
  display: flex;
}

.ruler {
  display: flex;
  height: 24px;
  align-items: flex-start;
}
.tab-kind {
  width: 16px;
  height: 16px;
  margin: 4px 6px 0 0;
  background: #fafafa;
  border: 1px solid #ddd;
  font: bold 9px/14px "Liberation Sans", sans-serif;
  color: #666;
  text-align: center;
}
.scale {
  display: flex;
  position: relative;
  width: 636px;
  height: 11px;
  margin-top: 5px;
  background: linear-gradient(90deg, #c6c6c6 72px, #fff 72px 563px, #c6c6c6 563px);
}
.inch {
  display: flex;
  flex: none;
  width: 77px;
  font-size: 10px;
  line-height: 11px;
  color: #444;
}
.inch svg {
  width: 69px;
  height: 12px;
}
.marker {
  position: absolute;
}
.first {
  left: 48px;
  top: -3px;
}
.hang {
  left: 68px;
  top: 5px;
}
.right {
  left: 559px;
  top: 5px;
}

.canvas {
  flex: 1;
  display: flex;
  min-height: 0;
  padding: 0 19px 17px 2px;
}
.vruler {
  width: 11px;
  margin-right: 10px;
  background: #fff;
  overflow: hidden;
}
.vinch {
  display: flex;
  flex-direction: column;
  align-items: center;
  height: 77px;
}
.vinch:first-child {
  margin-top: -7px;
}
.vinch svg {
  width: 12px;
  height: 67px;
}
.vinch b {
  font-weight: normal;
  font-size: 9px;
  line-height: 10px;
  writing-mode: vertical-rl;
  transform: rotate(180deg);
}
.page {
  position: relative;
  flex: 1;
  background: #fff;
  border: solid #c6c6c6;
  border-width: 0 1px;
  padding: 7px 0 0 51px;
  color: #000;
}

/* ---------- formulas ---------- */
.line,
.note p,
.chapter,
.head {
  font-family: "Liberation Serif", "Noto Serif Bengali", "Noto Sans Bengali", serif;
  white-space: nowrap;
}
.line {
  height: 26px;
  font-size: 13px;
  line-height: 26px;
}
u {
  font-size: 12px;
  text-decoration: underline wavy #e00 1px;
  text-underline-offset: 1px;
  text-decoration-skip-ink: none;
}
.bn {
  font-size: 12px;
}
sub,
sup {
  font-size: 9px;
  line-height: 0;
}
sub {
  vertical-align: -3px;
}
sup {
  vertical-align: 5px;
}
.hi {
  vertical-align: 11px;
}
.frac {
  display: inline-flex;
  flex-direction: column;
  vertical-align: middle;
  margin: 0 1px;
  font-size: 10px;
  line-height: 11px;
  text-align: center;
}
.frac > span {
  padding: 0 1px;
}
.frac > span:first-child {
  border-bottom: 1px solid;
}
.frac sub,
.frac sup {
  font-size: 8px;
}
.frac sup {
  vertical-align: 3px;
}
.frac sub {
  vertical-align: -2px;
}
.lp,
.rp,
.lb,
.rb {
  display: inline-block;
  vertical-align: middle;
  width: 5px;
  height: 24px;
}
.lp {
  border-left: 1px solid;
  border-radius: 100% 0 0 100% / 50% 0 0 50%;
}
.rp {
  border-right: 1px solid;
  border-radius: 0 100% 100% 0 / 0 50% 50% 0;
}
.lb {
  border: 1px solid;
  border-right: none;
  width: 4px;
}
.rb {
  border: 1px solid;
  border-left: none;
  width: 4px;
}
.sqrt {
  display: inline-block;
  position: relative;
  padding-left: 7px;
  line-height: 14px;
}
.sqrt::before {
  content: "";
  position: absolute;
  left: 0;
  top: 0;
  bottom: 0;
  width: 7px;
  background: currentColor;
  clip-path: polygon(0 60%, 25% 50%, 52% 84%, 86% 0, 100% 0, 60% 100%, 45% 100%, 18% 60%, 0 66%);
}
.sqrt > span {
  display: block;
  border-top: 1px solid;
  padding: 0 1px;
}
.sqrt.tall {
  vertical-align: middle;
  line-height: 22px;
}
.tall .sqrt {
  line-height: 14px;
}
.int {
  font-size: 19px;
  vertical-align: middle;
  line-height: 20px;
}
.lim {
  display: inline-flex;
  flex-direction: column;
  justify-content: space-between;
  vertical-align: middle;
  height: 24px;
  font-size: 9px;
  line-height: 10px;
}

.num {
  display: inline-block;
  width: 20px;
  font-family: "Open Sans", sans-serif;
  font-size: 12px;
}
.top {
  height: 32px;
  line-height: 32px;
}
.chapter {
  width: 534px;
  height: 28px;
  margin: 8px 0 2px;
  font-size: 16px;
  font-weight: normal;
  line-height: 28px;
  text-align: center;
}
.chapter span {
  border-bottom: 1px solid;
}
.chapter u {
  font-size: 16px;
}
.page .sub {
  height: 24px;
  line-height: 24px;
}
.page .sub .num {
  width: 40px;
  margin-right: 4px;
  text-align: right;
  font-family: "Liberation Serif", serif;
}
.page .deep {
  height: 28px;
  line-height: 28px;
}
.ten {
  height: 24px;
  line-height: 24px;
}
.ten .num {
  width: 24px;
  margin-left: -4px;
}
.note {
  position: absolute;
  border: 1px solid #70ad47;
  border-radius: 8px;
  background: #fff;
  padding: 5px 0 5px 8px;
}
.heights {
  left: 284px;
  top: 163px;
  width: 277px;
}
.values {
  left: 336px;
  top: 333px;
  width: 226px;
}
.note p {
  height: 23px;
  font-size: 12px;
  line-height: 23px;
}
.note u {
  font-size: 11px;
}
.values p {
  height: 21px;
  line-height: 21px;
}
.note .frac {
  font-size: 8px;
  line-height: 9px;
}
.note .lp,
.note .rp {
  height: 19px;
}
.caption {
  position: absolute;
  left: 228px;
  bottom: -10px;
  font-size: 30px;
  line-height: 40px;
  white-space: nowrap;
  color: #000;
}

.status {
  display: flex;
  align-items: center;
  height: 21px;
  padding-left: 5px;
  background: #f3f3f3;
  border-top: 1px solid #c6c6c6;
  font-size: 11px;
  color: #444;
}
.words {
  margin: 0 18px;
}
.view {
  width: 38px;
  height: 20px;
  display: flex;
  align-items: center;
  justify-content: center;
}
.on {
  background: #c6c6c6;
}
.zoom-sign {
  width: 14px;
  font-size: 16px;
  line-height: 16px;
  text-align: center;
}
.zoom {
  appearance: none;
  width: 100px;
  height: 12px;
  background: linear-gradient(#999, #999) no-repeat center / 100% 1px;
}
.zoom::-webkit-slider-thumb {
  appearance: none;
  width: 5px;
  height: 11px;
  background: #666;
}
.percent {
  margin: 0 19px 0 8px;
}

/* ---------- Acrobat ---------- */
.acro {
  flex: 647 1 0;
  min-width: 0;
  display: flex;
  flex-direction: column;
  background: #4d4d4d;
  color: #eee;
}
.acro-title {
  display: flex;
  align-items: center;
  height: 31px;
  padding: 0 14px 0 11px;
  gap: 6px;
  background: #2b2b2b;
  border-top: 1px solid #444;
  color: #8c8c8c;
}
.acro-title .win {
  width: 40px;
}
.acro-title .win path {
  stroke: #999;
}
.menu {
  display: flex;
  gap: 13px;
  height: 20px;
  padding-left: 8px;
  background: #3c3c3c;
}
.acro-tabs {
  display: flex;
  height: 37px;
  border-top: 1px solid #2b2b2b;
}
.home-tabs,
.user-tabs {
  display: flex;
  align-items: center;
  background: #424242;
  border-bottom: 1px solid #2b2b2b;
}
.home-tabs {
  width: 153px;
  padding-left: 17px;
  gap: 31px;
  border-right: 1px solid #2b2b2b;
  font-size: 14px;
  color: #bbb;
}
.file-tab {
  display: flex;
  align-items: center;
  justify-content: flex-end;
  width: 179px;
  padding-right: 9px;
  gap: 37px;
  font-size: 13px;
}
.file-tab button {
  display: flex;
}
.user-tabs {
  flex: 1;
  min-width: 0;
  overflow: hidden;
  gap: 20px;
  padding-left: 135px;
  border-left: 1px solid #2b2b2b;
}
.sign {
  margin-left: 11px;
  flex: none;
  font-size: 15px;
  font-weight: 600;
}
.acro-tools {
  display: flex;
  align-items: center;
  height: 47px;
  padding-left: 16px;
  gap: 21px;
  border-bottom: 1px solid #3c3c3c;
}
.acro-tools button {
  display: flex;
}
.page-no {
  width: 28px;
  height: 28px;
  border-bottom: 1px solid #777;
  text-align: center;
}
.of {
  margin-left: -14px;
}
.bar {
  height: 28px;
  margin: 0 -2px 0 -4px;
  border-left: 1px solid #3a3a3a;
}
.zoom-pick {
  appearance: none;
  width: 71px;
  height: 28px;
  padding-left: 8px;
  border-bottom: 1px solid #777;
  background: url("data:image/svg+xml,%3Csvg xmlns='http://www.w3.org/2000/svg' width='8' height='5'%3E%3Cpath d='M0 0h8L4 5z' fill='%23ccc'/%3E%3C/svg%3E") no-repeat right 8px center;
}
.dots {
  margin-left: 2px;
}
.acro-view {
  flex: 1;
  display: flex;
  min-height: 0;
  padding-right: 1px;
}
.pane {
  width: 19px;
  display: flex;
  align-items: center;
  padding-left: 7px;
  background: #424242;
}
.tex {
  position: relative;
  flex: 1;
  overflow: hidden;
  background: #fff;
  padding-left: 60px;
  color: #111;
}
.head {
  height: 23px;
  font-size: 12px;
  line-height: 20px;
}
.tex .line {
  height: 32px;
  line-height: 32px;
}
.tex .low {
  height: 29px;
  line-height: 29px;
}
.tex .plain {
  height: 22px;
  line-height: 22px;
}
.tex .high {
  height: 34px;
  line-height: 34px;
}
.tex .sub {
  height: 30px;
  line-height: 30px;
  padding-left: 49px;
}
.tex .sub.high {
  height: 34px;
  line-height: 34px;
}
.sublist {
  margin: 6px 0 9px;
}
.tight {
  margin-bottom: 3px;
}
.tex .num {
  font-family: "Liberation Serif", serif;
  font-size: 13px;
  min-width: 20px;
  width: auto;
  padding: 0 3px;
}
.tex .frac {
  font-size: 13px;
  line-height: 13px;
}
.tex .frac sub,
.tex .frac sup {
  font-size: 9px;
}
.tex .lp,
.tex .rp,
.tex .lb,
.tex .rb {
  height: 28px;
  margin: 0 1px;
}
.tex .hi {
  vertical-align: 13px;
}
.tex .int {
  font-size: 26px;
}
.tex .lim {
  height: 28px;
}
.folio {
  position: absolute;
  left: 311px;
  bottom: 6px;
  font: 10px/14px "Liberation Serif", serif;
}
.tex .caption {
  left: 257px;
  bottom: 23px;
}
.cursor {
  position: absolute;
  left: 181px;
  top: 173px;
}
```
